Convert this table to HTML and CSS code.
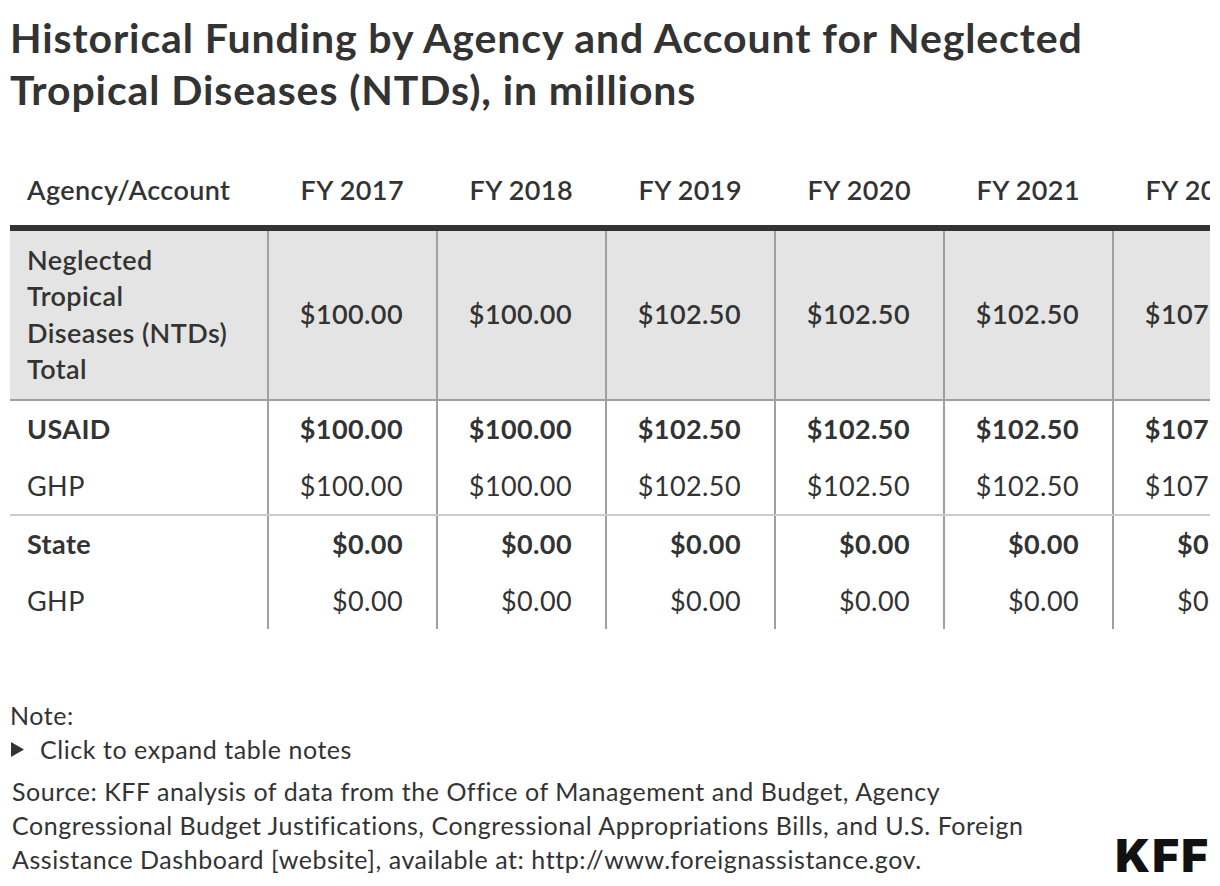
FILE: index.html
```html
<!DOCTYPE html>
<html lang="en">
<head>
<meta charset="utf-8">
<title>Historical Funding by Agency and Account for Neglected Tropical Diseases (NTDs)</title>
<link rel="stylesheet" href="styles.css">
</head>
<body>
<main class="page">
  <h1 class="title">Historical Funding by Agency and Account for Neglected Tropical Diseases (NTDs), in millions</h1>

  <div class="table-wrap">
    <table class="data">
      <colgroup>
        <col class="col-label">
        <col class="col-num"><col class="col-num"><col class="col-num"><col class="col-num"><col class="col-num"><col class="col-num"><col class="col-num">
      </colgroup>
      <thead>
        <tr>
          <th class="label">Agency/Account</th>
          <th>FY 2017</th>
          <th>FY 2018</th>
          <th>FY 2019</th>
          <th>FY 2020</th>
          <th>FY 2021</th>
          <th>FY 2022</th>
          <th>FY 2023</th>
        </tr>
      </thead>
      <tbody>
        <tr class="total">
          <td class="label">Neglected Tropical Diseases&nbsp;(NTDs) Total</td>
          <td>$100.00</td><td>$100.00</td><td>$102.50</td><td>$102.50</td><td>$102.50</td><td>$107.50</td><td>$114.50</td>
        </tr>
        <tr class="agency">
          <td class="label">USAID</td>
          <td>$100.00</td><td>$100.00</td><td>$102.50</td><td>$102.50</td><td>$102.50</td><td>$107.50</td><td>$114.50</td>
        </tr>
        <tr class="account group-end">
          <td class="label">GHP</td>
          <td>$100.00</td><td>$100.00</td><td>$102.50</td><td>$102.50</td><td>$102.50</td><td>$107.50</td><td>$114.50</td>
        </tr>
        <tr class="agency">
          <td class="label">State</td>
          <td>$0.00</td><td>$0.00</td><td>$0.00</td><td>$0.00</td><td>$0.00</td><td>$0.00</td><td>$0.00</td>
        </tr>
        <tr class="account">
          <td class="label">GHP</td>
          <td>$0.00</td><td>$0.00</td><td>$0.00</td><td>$0.00</td><td>$0.00</td><td>$0.00</td><td>$0.00</td>
        </tr>
      </tbody>
    </table>
  </div>

  <footer class="notes">
    <p class="note-label">Note:</p>
    <details class="expand">
      <summary><svg class="tri" width="13" height="15" viewBox="0 0 13 15" aria-hidden="true"><polygon points="0,0 13,7.5 0,15" fill="#333"/></svg><span>Click to expand table notes</span></summary>
    </details>
    <div class="source-row">
      <p class="source">Source: KFF analysis of data from the Office of Management and Budget, Agency Congressional Budget Justifications, Congressional Appropriations Bills, and U.S. Foreign Assistance Dashboard [website], available at: http://www.foreignassistance.gov.</p>
      <div class="logo">KFF</div>
    </div>
  </footer>
</main>
</body>
</html>
```

FILE: styles.css
```css
* { box-sizing: border-box; }

html, body {
  margin: 0;
  background: #ffffff;
}

body {
  font-family: Lato, "Open Sans", sans-serif;
  color: #333333;
}

.page {
  padding: 12px 10px 0 10px;
  width: 1220px;
}

.title {
  margin: 0;
  font-size: 41px;
  letter-spacing: 0.9px;
  line-height: 52px;
  font-weight: 700;
  color: #333333;
}

.table-wrap {
  margin-top: 46px;
  width: 1200px;
  overflow: hidden;
}

.data {
  border-collapse: collapse;
  table-layout: fixed;
  width: 1441px;
  font-size: 27px;
  letter-spacing: 0.4px;
  line-height: 36.6px;
}

.col-label { width: 258px; }
.col-num { width: 169px; }

.data th {
  font-weight: 600;
  text-align: right;
  padding: 10px 33px 16px 17px;
  border-bottom: 6px solid #333333;
  vertical-align: bottom;
  white-space: nowrap;
}

.data th.label {
  text-align: left;
  padding-left: 17px;
  padding-right: 20px;
}

.data td.label {
  text-align: left;
  padding-left: 17px;
  padding-right: 42px;
}

.data td {
  text-align: right;
  padding: 10px 33px 10px 17px;
  border-left: 2px solid #a0a0a0;
  vertical-align: middle;
  white-space: nowrap;
}

.data td.label {
  border-left: none;
  white-space: normal;
}

.total td {
  background: #e4e4e4;
  font-weight: 600;
  padding-top: 11px;
  padding-bottom: 11px;
  border-bottom: 2px solid #a0a0a0;
}

.agency td {
  font-weight: 700;
}

.account td {
  font-weight: 400;
}

.group-end td {
  border-bottom: 2px solid #cccccc;
}

.notes {
  margin-top: 69px;
  font-size: 25px;
  letter-spacing: 0.55px;
  line-height: 34px;
}

.note-label {
  margin: 0;
}

.expand summary {
  list-style: none;
  display: flex;
  align-items: center;
  gap: 16px;
  padding-left: 1px;
  cursor: pointer;
}

.expand summary::-webkit-details-marker { display: none; }

.tri { display: block; }

.source-row {
  margin-top: 8px;
  display: flex;
  justify-content: space-between;
  align-items: flex-end;
}

.source {
  margin: 0;
  max-width: 1075px;
  padding-left: 2px;
}

.logo {
  font-family: Inter, "Liberation Sans", sans-serif;
  font-weight: 900;
  font-size: 46px;
  line-height: 1;
  letter-spacing: 2px;
  color: #111111;
  margin-bottom: -2px;
}
```
